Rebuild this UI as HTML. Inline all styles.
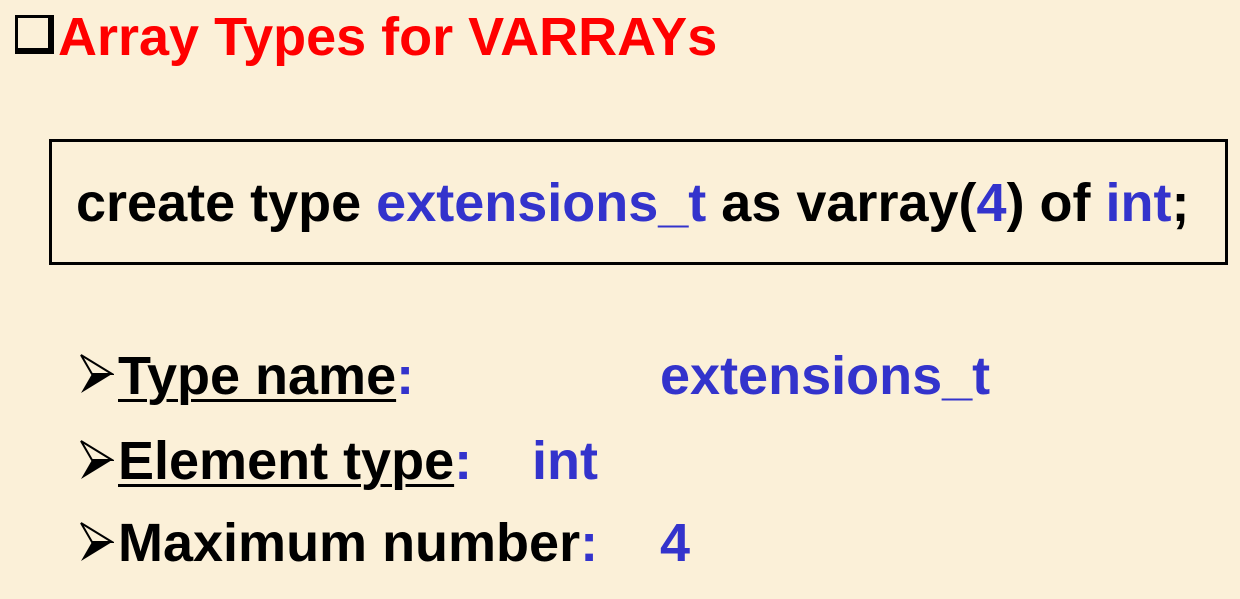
<!DOCTYPE html>
<html><head><style>
html,body{margin:0;padding:0}
body{width:1240px;height:599px;background:#fbf0d8;position:relative;overflow:hidden;font-family:"Liberation Sans",Arial,sans-serif;font-weight:bold}
.abs{position:absolute;white-space:nowrap;line-height:1}
.b{color:#3333cc}
.title{left:58px;top:10px;font-size:54px;color:#ff0000}
.cb{position:absolute;left:15px;top:15px;width:30px;height:30px;border:3px solid #000;border-right-width:6px;border-bottom-width:6px;background:#fbf0d8}
.box{position:absolute;left:49px;top:139px;width:1173px;height:120px;border:3.5px solid #000}
.code{left:76px;top:176px;font-size:54px}
.li{font-size:54px;left:118px}
.u{text-decoration:underline;text-decoration-thickness:3px;text-underline-offset:5px}
.arr{position:absolute;left:78px;width:36px;height:42px}
</style></head><body>
<div class="cb"></div>
<div class="abs title">Array Types for VARRAYs</div>
<div class="box"></div>
<div class="abs code">create type <span class="b">extensions_t</span> as varray(<span class="b">4</span>) of <span class="b">int</span>;</div>

<svg class="arr" style="top:353px" viewBox="0 0 36 42"><path d="M3 2 L34 21 L14 21 Z" fill="none" stroke="#000" stroke-width="2"/><path d="M3 40 L34 21 L14 21 Z" fill="#000"/></svg>
<div class="abs li" style="top:349px"><span class="u">Type name</span><span class="b">:</span></div>
<div class="abs li b" style="left:660px;top:349px">extensions_t</div>

<svg class="arr" style="top:439px" viewBox="0 0 36 42"><path d="M3 2 L34 21 L14 21 Z" fill="none" stroke="#000" stroke-width="2"/><path d="M3 40 L34 21 L14 21 Z" fill="#000"/></svg>
<div class="abs li" style="top:434px"><span class="u">Element type</span><span class="b">:</span></div>
<div class="abs li b" style="left:532px;top:434px">int</div>

<svg class="arr" style="top:521px" viewBox="0 0 36 42"><path d="M3 2 L34 21 L14 21 Z" fill="none" stroke="#000" stroke-width="2"/><path d="M3 40 L34 21 L14 21 Z" fill="#000"/></svg>
<div class="abs li" style="top:516px">Maximum number<span class="b">:</span></div>
<div class="abs li b" style="left:660px;top:516px">4</div>
</body></html>
